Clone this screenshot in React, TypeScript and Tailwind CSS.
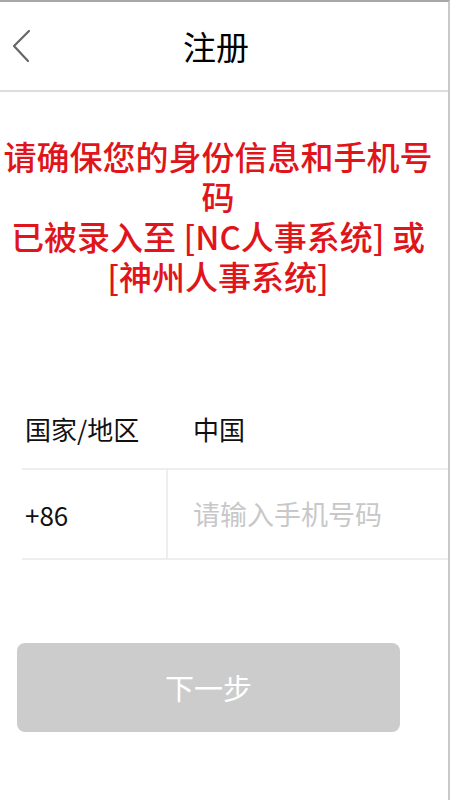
import React, { useState } from 'react';

const font = { fontFamily: '"Noto Sans CJK SC", "Noto Sans", sans-serif' };

function BackIcon() {
  return (
    <svg width="22" height="36" viewBox="0 0 22 36" fill="none">
      <path d="M18 3 L3 18 L17 33" stroke="#666" strokeWidth="2.2" strokeLinecap="round" strokeLinejoin="round" />
    </svg>
  );
}

export default function App() {
  const [phone, setPhone] = useState('');

  return (
    <div
      className="w-[450px] h-[800px] bg-white border-t-2 border-r-2 border-t-[#a8a8a8] border-r-[#c8c8c8] overflow-hidden"
      style={font}
    >
      {/* Header */}
      <div className="h-[90px] border-b-2 border-[#dddddd] flex items-center pr-[16px]">
        <div className="w-[60px] pl-[11px] flex items-center">
          <BackIcon />
        </div>
        <div className="flex-1 text-center text-[33px] text-black leading-none">注册</div>
        <div className="w-[60px]" />
      </div>

      {/* Notice */}
      <div className="mt-[44px] pr-[12px] text-center text-[33px] leading-[40px] font-medium text-[#e0151b]">
        请确保您的身份信息和手机号码
        <br />
        已被录入至 [NC人事系统] 或 [神州人事系统]
      </div>

      {/* Form */}
      <div className="mt-[93px] ml-[22px]">
        <div className="h-[81px] flex items-center border-b-2 border-[#eeeeee] text-[26px] text-[#111]">
          <div className="w-[171px] pl-[3px]">国家/地区</div>
          <div>中国</div>
        </div>
        <div className="h-[90px] flex border-b-2 border-[#eeeeee] text-[26px]">
          <div className="w-[146px] pl-[3px] flex items-center border-r-2 border-[#eeeeee] text-[#111]">+86</div>
          <input
            value={phone}
            onChange={e => setPhone(e.target.value)}
            placeholder="请输入手机号码"
            className="flex-1 min-w-0 pl-[25px] text-[27px] outline-none bg-transparent placeholder:text-[#c8c8c8]"
            style={font}
          />
        </div>
      </div>

      {/* Next */}
      <button
        className="mt-[83px] ml-[17px] w-[383px] h-[89px] rounded-[8px] bg-[#cccccc] text-white text-[29px] flex items-center justify-center"
        style={font}
      >
        下一步
      </button>
    </div>
  );
}
